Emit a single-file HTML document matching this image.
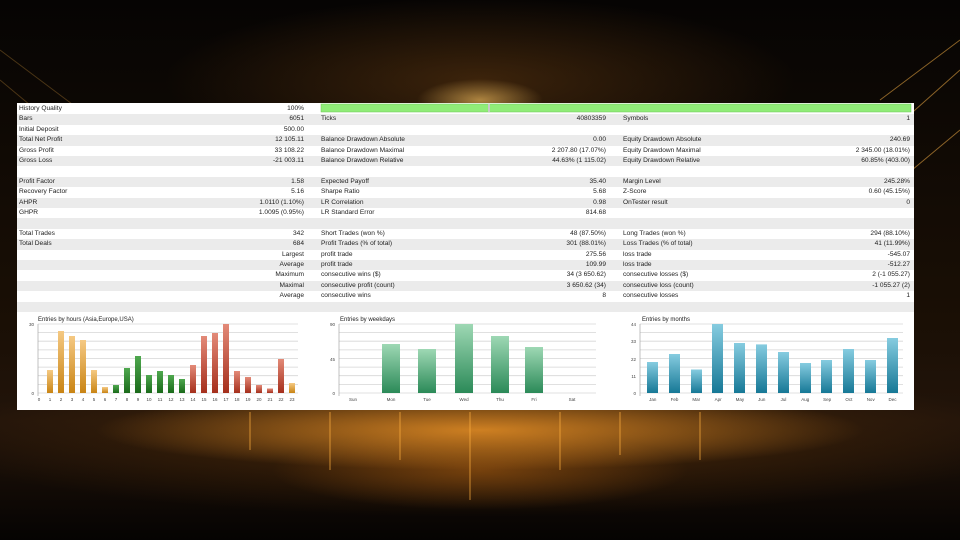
<!DOCTYPE html>
<html><head><meta charset="utf-8"><style>
*{margin:0;padding:0;box-sizing:border-box}
body{width:960px;height:540px;overflow:hidden;position:relative;background:#070503;font-family:"Liberation Sans",sans-serif}
.bg{position:absolute;inset:0;background:
radial-gradient(ellipse 90px 30px at 480px 100px,rgba(255,200,100,.6),rgba(0,0,0,0) 70%),
radial-gradient(ellipse 420px 110px at 480px 80px,rgba(120,70,20,.45),rgba(0,0,0,0) 75%),
radial-gradient(ellipse 480px 50px at 480px 430px,rgba(240,150,40,.8),rgba(0,0,0,0) 80%),
radial-gradient(ellipse 260px 50px at 480px 470px,rgba(200,110,20,.45),rgba(0,0,0,0) 80%),
radial-gradient(ellipse 650px 90px at 480px 440px,rgba(110,60,10,.55),rgba(0,0,0,0) 85%),
linear-gradient(#060403,#140c05 40%,#1a0f05 60%,#22140a 78%,#050302)}
.panel{position:absolute;left:17px;top:103px;width:897px;height:307px;background:#fff}
.row{position:absolute;left:0;width:897px;height:10.4px;font-size:6.6px;line-height:10.4px;color:#222}
.row.g{background:#ebebeb}
.row span{position:absolute;white-space:nowrap}
.l1{left:2px}.v1{right:610px}.l2{left:304px}.v2{right:308px}.l3{left:606px}.v3{right:4px}
svg{position:absolute;left:0;top:0}
</style></head><body>
<div class="bg"></div>
<svg width="960" height="540">
<g stroke="#e0a040" stroke-width="1" opacity=".6"><path d="M870 150L960 70M880 100L960 40M900 180L960 130"/><path d="M0 50L80 110M0 80L60 130" opacity=".5"/></g>
<g stroke="#ffb040" opacity=".35"><path d="M330 412V470M400 412V460M470 412V500M560 412V470M620 412V455M250 412V450M700 412V460" stroke-width="2"/></g>
</svg>
<div class="panel">
<div class="row" style="top:1px"><span class="l1">History Quality</span><span class="v1">100%</span></div>
<div class="row g" style="top:11.4px"><span class="l1">Bars</span><span class="v1">6051</span><span class="l2">Ticks</span><span class="v2">40803359</span><span class="l3">Symbols</span><span class="v3">1</span></div>
<div class="row" style="top:21.8px"><span class="l1">Initial Deposit</span><span class="v1">500.00</span></div>
<div class="row g" style="top:32.2px"><span class="l1">Total Net Profit</span><span class="v1">12 105.11</span><span class="l2">Balance Drawdown Absolute</span><span class="v2">0.00</span><span class="l3">Equity Drawdown Absolute</span><span class="v3">240.69</span></div>
<div class="row" style="top:42.6px"><span class="l1">Gross Profit</span><span class="v1">33 108.22</span><span class="l2">Balance Drawdown Maximal</span><span class="v2">2 207.80 (17.07%)</span><span class="l3">Equity Drawdown Maximal</span><span class="v3">2 345.00 (18.01%)</span></div>
<div class="row g" style="top:53px"><span class="l1">Gross Loss</span><span class="v1">-21 003.11</span><span class="l2">Balance Drawdown Relative</span><span class="v2">44.63% (1 115.02)</span><span class="l3">Equity Drawdown Relative</span><span class="v3">60.85% (403.00)</span></div>
<div class="row" style="top:63.4px"></div>
<div class="row g" style="top:73.8px"><span class="l1">Profit Factor</span><span class="v1">1.58</span><span class="l2">Expected Payoff</span><span class="v2">35.40</span><span class="l3">Margin Level</span><span class="v3">245.28%</span></div>
<div class="row" style="top:84.2px"><span class="l1">Recovery Factor</span><span class="v1">5.16</span><span class="l2">Sharpe Ratio</span><span class="v2">5.68</span><span class="l3">Z-Score</span><span class="v3">0.60 (45.15%)</span></div>
<div class="row g" style="top:94.6px"><span class="l1">AHPR</span><span class="v1">1.0110 (1.10%)</span><span class="l2">LR Correlation</span><span class="v2">0.98</span><span class="l3">OnTester result</span><span class="v3">0</span></div>
<div class="row" style="top:105px"><span class="l1">GHPR</span><span class="v1">1.0095 (0.95%)</span><span class="l2">LR Standard Error</span><span class="v2">814.68</span></div>
<div class="row g" style="top:115.4px"></div>
<div class="row" style="top:125.8px"><span class="l1">Total Trades</span><span class="v1">342</span><span class="l2">Short Trades (won %)</span><span class="v2">48 (87.50%)</span><span class="l3">Long Trades (won %)</span><span class="v3">294 (88.10%)</span></div>
<div class="row g" style="top:136.2px"><span class="l1">Total Deals</span><span class="v1">684</span><span class="l2">Profit Trades (% of total)</span><span class="v2">301 (88.01%)</span><span class="l3">Loss Trades (% of total)</span><span class="v3">41 (11.99%)</span></div>
<div class="row" style="top:146.6px"><span class="v1">Largest</span><span class="l2">profit trade</span><span class="v2">275.56</span><span class="l3">loss trade</span><span class="v3">-545.07</span></div>
<div class="row g" style="top:157px"><span class="v1">Average</span><span class="l2">profit trade</span><span class="v2">109.99</span><span class="l3">loss trade</span><span class="v3">-512.27</span></div>
<div class="row" style="top:167.4px"><span class="v1">Maximum</span><span class="l2">consecutive wins ($)</span><span class="v2">34 (3 650.62)</span><span class="l3">consecutive losses ($)</span><span class="v3">2 (-1 055.27)</span></div>
<div class="row g" style="top:177.8px"><span class="v1">Maximal</span><span class="l2">consecutive profit (count)</span><span class="v2">3 650.62 (34)</span><span class="l3">consecutive loss (count)</span><span class="v3">-1 055.27 (2)</span></div>
<div class="row" style="top:188.2px"><span class="v1">Average</span><span class="l2">consecutive wins</span><span class="v2">8</span><span class="l3">consecutive losses</span><span class="v3">1</span></div>
<div class="row g" style="top:198.6px;height:10px"></div>
</div>
<svg width="960" height="540" font-family="Liberation Sans, sans-serif">
<defs>
<linearGradient id="go" x1="0" y1="0" x2="0" y2="1"><stop offset="0" stop-color="#f5c983"/><stop offset="1" stop-color="#c98414"/></linearGradient>
<linearGradient id="gg" x1="0" y1="0" x2="0" y2="1"><stop offset="0" stop-color="#4fa84f"/><stop offset="1" stop-color="#1a6a1a"/></linearGradient>
<linearGradient id="gr" x1="0" y1="0" x2="0" y2="1"><stop offset="0" stop-color="#e38a78"/><stop offset="1" stop-color="#a52f1c"/></linearGradient>
<linearGradient id="gw" x1="0" y1="0" x2="0" y2="1"><stop offset="0" stop-color="#9ed8b4"/><stop offset="1" stop-color="#2b8a58"/></linearGradient>
<linearGradient id="gm" x1="0" y1="0" x2="0" y2="1"><stop offset="0" stop-color="#86cce0"/><stop offset="1" stop-color="#167896"/></linearGradient>
</defs>
<rect x="321" y="104" width="590" height="8" fill="#90ec78" stroke="#6cc456" stroke-width=".5"/>
<rect x="488" y="104" width="2" height="8" fill="#c8c8c8"/>
<g stroke="#d6d6d6" stroke-width=".8">
<path d="M38 324H298M38 332.6H298M38 341.2H298M38 349.9H298M38 358.5H298M38 367.1H298M38 375.7H298M38 384.4H298M38 393H298"/>
<path d="M339 324H596M339 332.6H596M339 341.2H596M339 349.9H596M339 358.5H596M339 367.1H596M339 375.7H596M339 384.4H596M339 393H596"/>
<path d="M640 324H903M640 332.6H903M640 341.2H903M640 349.9H903M640 358.5H903M640 367.1H903M640 375.7H903M640 384.4H903M640 393H903"/>
</g>
<g stroke="#999" stroke-width=".6"><path d="M38 324V396M339 324V396M640 324V396"/></g>
<g font-size="6" fill="#222"><text x="38" y="321">Entries by hours (Asia,Europe,USA)</text><text x="340" y="321">Entries by weekdays</text><text x="642" y="321">Entries by months</text></g>
<g font-size="4.5" fill="#444" text-anchor="end"><text x="34" y="326">30</text><text x="34" y="395">0</text><text x="335" y="326">90</text><text x="335" y="361">45</text><text x="335" y="395">0</text><text x="636" y="326">44</text><text x="636" y="343">33</text><text x="636" y="361">22</text><text x="636" y="378">11</text><text x="636" y="395">0</text></g>
<g fill="url(#go)"><rect x="47" y="370" width="6" height="23"/><rect x="58" y="331" width="6" height="62"/><rect x="69" y="336" width="6" height="57"/><rect x="80" y="340" width="6" height="53"/><rect x="91" y="370" width="6" height="23"/><rect x="102" y="387" width="6" height="6"/><rect x="289" y="383" width="6" height="10"/></g>
<g fill="url(#gg)"><rect x="113" y="385" width="6" height="8"/><rect x="124" y="368" width="6" height="25"/><rect x="135" y="356" width="6" height="37"/><rect x="146" y="375" width="6" height="18"/><rect x="157" y="371" width="6" height="22"/><rect x="168" y="375" width="6" height="18"/><rect x="179" y="379" width="6" height="14"/></g>
<g fill="url(#gr)"><rect x="190" y="365" width="6" height="28"/><rect x="201" y="336" width="6" height="57"/><rect x="212" y="333" width="6" height="60"/><rect x="223" y="324" width="6" height="69"/><rect x="234" y="371" width="6" height="22"/><rect x="245" y="377" width="6" height="16"/><rect x="256" y="385" width="6" height="8"/><rect x="267" y="388.5" width="6" height="4.5"/><rect x="278" y="359" width="6" height="34"/></g>
<g font-size="4.5" fill="#444" text-anchor="middle"><text x="39" y="401">0</text><text x="50" y="401">1</text><text x="61" y="401">2</text><text x="72" y="401">3</text><text x="83" y="401">4</text><text x="94" y="401">5</text><text x="105" y="401">6</text><text x="116" y="401">7</text><text x="127" y="401">8</text><text x="138" y="401">9</text><text x="149" y="401">10</text><text x="160" y="401">11</text><text x="171" y="401">12</text><text x="182" y="401">13</text><text x="193" y="401">14</text><text x="204" y="401">15</text><text x="215" y="401">16</text><text x="226" y="401">17</text><text x="237" y="401">18</text><text x="248" y="401">19</text><text x="259" y="401">20</text><text x="270" y="401">21</text><text x="281" y="401">22</text><text x="292" y="401">23</text></g>
<g fill="url(#gw)"><rect x="382" y="344" width="18" height="49"/><rect x="418" y="349" width="18" height="44"/><rect x="455" y="324" width="18" height="69"/><rect x="491" y="336" width="18" height="57"/><rect x="525" y="347" width="18" height="46"/></g>
<g font-size="4.5" fill="#444" text-anchor="middle"><text x="353" y="401">Sun</text><text x="391" y="401">Mon</text><text x="427" y="401">Tue</text><text x="464" y="401">Wed</text><text x="500" y="401">Thu</text><text x="534" y="401">Fri</text><text x="572" y="401">Sat</text></g>
<g fill="url(#gm)"><rect x="647" y="362" width="11" height="31"/><rect x="669" y="354" width="11" height="39"/><rect x="691" y="369.5" width="11" height="23.5"/><rect x="712" y="324" width="11" height="69"/><rect x="734" y="343" width="11" height="50"/><rect x="756" y="344.4" width="11" height="48.6"/><rect x="778" y="352" width="11" height="41"/><rect x="800" y="363" width="11" height="30"/><rect x="821" y="360" width="11" height="33"/><rect x="843" y="349" width="11" height="44"/><rect x="865" y="360" width="11" height="33"/><rect x="887" y="338" width="11" height="55"/></g>
<g font-size="4.5" fill="#444" text-anchor="middle"><text x="652.7" y="401">Jan</text><text x="674.5" y="401">Feb</text><text x="696.3" y="401">Mar</text><text x="718.1" y="401">Apr</text><text x="739.9" y="401">May</text><text x="761.7" y="401">Jun</text><text x="783.5" y="401">Jul</text><text x="805.3" y="401">Aug</text><text x="827.1" y="401">Sep</text><text x="848.9" y="401">Oct</text><text x="870.7" y="401">Nov</text><text x="892.5" y="401">Dec</text></g>
</svg>
</body></html>
